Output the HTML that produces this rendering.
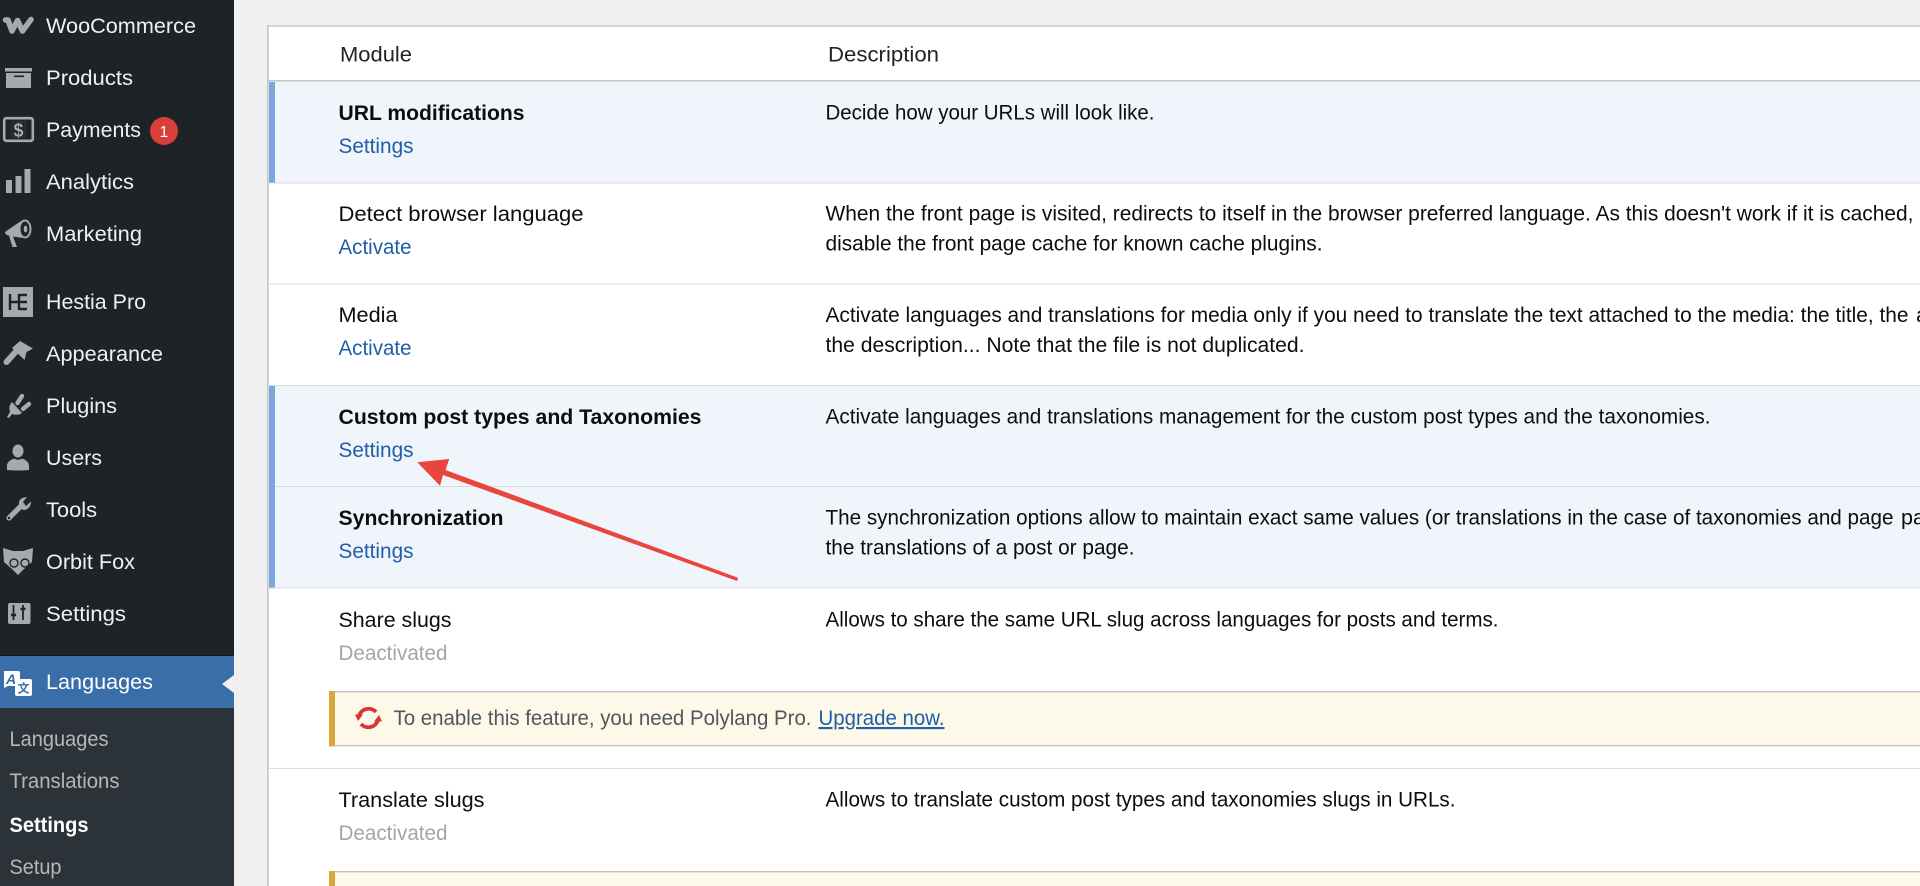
<!DOCTYPE html>
<html lang="en">
<head>
<meta charset="utf-8">
<title>Polylang Settings</title>
<style>
html,body{margin:0;padding:0;width:1920px;height:886px;overflow:hidden;background:#f0f0f1}
svg{display:block}
text{font-family:"Liberation Sans","Noto Sans CJK SC",sans-serif;font-size:21.5px;white-space:pre}
.m{fill:#f0f0f1}
.s{fill:#b4b7bb;font-size:21px}
.t{fill:#0c0d0e}
.b{font-weight:700}
.l{fill:#1f5ea8}
.d{fill:#a2a5aa}
.h{fill:#1d2327}
.i{fill:#a7aaad}
</style>
</head>
<body>
<svg width="1920" height="886" viewBox="0 0 1920 886" xmlns="http://www.w3.org/2000/svg">
<!-- sidebar -->
<rect x="0" y="0" width="234" height="886" fill="#1d2327"/>
<rect x="0" y="708" width="234" height="178" fill="#2c3338"/>
<rect x="0" y="655" width="234" height="1" fill="#111417"/>
<rect x="0" y="656" width="234" height="52" fill="#3a6ea9"/>
<polygon points="222,684 234,675 234,693" fill="#f0f0f1"/>

<text class="m" x="46" y="33" textLength="150" lengthAdjust="spacingAndGlyphs">WooCommerce</text>
<text class="m" x="46" y="85" textLength="87" lengthAdjust="spacingAndGlyphs">Products</text>
<text class="m" x="46" y="137" textLength="95" lengthAdjust="spacingAndGlyphs">Payments</text>
<text class="m" x="46" y="189" textLength="88" lengthAdjust="spacingAndGlyphs">Analytics</text>
<text class="m" x="46" y="241" textLength="96" lengthAdjust="spacingAndGlyphs">Marketing</text>
<text class="m" x="46" y="309" textLength="100" lengthAdjust="spacingAndGlyphs">Hestia Pro</text>
<text class="m" x="46" y="361" textLength="117" lengthAdjust="spacingAndGlyphs">Appearance</text>
<text class="m" x="46" y="413" textLength="71" lengthAdjust="spacingAndGlyphs">Plugins</text>
<text class="m" x="46" y="465" textLength="56" lengthAdjust="spacingAndGlyphs">Users</text>
<text class="m" x="46" y="517" textLength="51" lengthAdjust="spacingAndGlyphs">Tools</text>
<text class="m" x="46" y="569" textLength="89" lengthAdjust="spacingAndGlyphs">Orbit Fox</text>
<text class="m" x="46" y="621" textLength="80" lengthAdjust="spacingAndGlyphs">Settings</text>
<text x="46" y="689" fill="#fff" textLength="107" lengthAdjust="spacingAndGlyphs">Languages</text>
<text class="s" x="9.5" y="746" textLength="99" lengthAdjust="spacingAndGlyphs">Languages</text>
<text class="s" x="9.5" y="788" textLength="110" lengthAdjust="spacingAndGlyphs">Translations</text>
<text class="b" x="9.5" y="832" fill="#fff" textLength="79" lengthAdjust="spacingAndGlyphs" style="font-size:21px">Settings</text>
<text class="s" x="9.5" y="874" textLength="52" lengthAdjust="spacingAndGlyphs">Setup</text>

<!-- badge -->
<circle cx="164" cy="131" r="14" fill="#d63f3a"/>
<text x="164" y="137" fill="#fff" text-anchor="middle" style="font-size:16px">1</text>

<!-- icons -->
<path d="M5.5 20 H8 L12 31 L17.5 20.5 L22.5 31 L31 19.5" fill="none" stroke="#a7aaad" stroke-width="5.6" stroke-linejoin="round" stroke-linecap="round"/>
<path class="i" d="M5 68 H32 V71.5 H5 Z M6 73 H31 V88 H6 Z"/>
<rect x="14" y="75.5" width="10" height="1.6" fill="#1d2327"/>
<rect x="4.2" y="118.2" width="28.6" height="22.6" rx="2" fill="none" stroke="#a7aaad" stroke-width="2.6"/>
<rect x="12" y="122" width="13" height="15" fill="none" stroke="#34393e" stroke-width="1"/>
<text x="18.5" y="136.5" class="b" fill="#a7aaad" text-anchor="middle" style="font-size:18px">$</text>
<path class="i" d="M6 180 H12 V193 H6 Z M15.5 176 H21.5 V193 H15.5 Z M24.5 169 H30.5 V193 H24.5 Z"/>
<path class="i" d="M5 232 L21 221 Q17 228 22 238 L13 236.5 L17 247 L12.5 247 L9 235.5 Q5 235 5 232 Z"/>
<ellipse cx="25" cy="229" rx="5.5" ry="8.5" fill="none" stroke="#a7aaad" stroke-width="2"/>
<ellipse cx="25.5" cy="229" rx="1.8" ry="3.5" class="i"/>
<rect x="3" y="287" width="30" height="30" class="i"/>
<path d="M10 294 V310 M19 294 V310 M10 302 H27 M19 295 H27 M19 309 H27" fill="none" stroke="#1d2327" stroke-width="2.4"/>
<path class="i" d="M12 348 L20 341 L33 348.5 L26.5 352 L24.5 360 Z"/>
<path d="M6.5 362 L15.5 352" stroke="#a7aaad" stroke-width="6" stroke-linecap="round"/>
<path class="i" d="M7 417 L10 412 Q8 406 12 402 L22 413 Q18 416 12 414 L9 418 Z"/>
<path d="M17.5 403 L22 396 M23 409 L29 404" stroke="#a7aaad" stroke-width="4.4" stroke-linecap="round"/>
<ellipse cx="18" cy="451" rx="5.5" ry="6.5" class="i"/>
<path class="i" d="M7 470 V465 Q7.5 461 14 458.5 Q18 461 22 458.5 Q28.5 461 29 465 V470 Q18 471 7 470 Z"/>
<path d="M9 518 L22 505" stroke="#a7aaad" stroke-width="5.2" stroke-linecap="round"/>
<path class="i" d="M19 505 Q18 499 24 497.5 L27 497 L23 502 L26 506 L31 501.5 Q31 508 25 510 Q21 510.5 19 505 Z"/>
<circle cx="9" cy="518" r="1.2" fill="#1d2327"/>
<path class="i" d="M3 548 L13 551 H23 L33 548 L32 562 L24 569 L18 575 L12 569 L4 562 Z"/>
<circle cx="14" cy="563" r="4" fill="#a7aaad" stroke="#1d2327" stroke-width="1.4"/>
<circle cx="25" cy="563" r="4" fill="#a7aaad" stroke="#1d2327" stroke-width="1.4"/>
<rect x="8" y="603" width="22.5" height="21" rx="2" class="i"/>
<path d="M13.5 605 V620 M23 605 V620" stroke="#1d2327" stroke-width="1.8"/>
<path d="M11 615 H16 M20.5 609 H25.5" stroke="#1d2327" stroke-width="2.4"/>
<path d="M5 671 H18 Q20 671 20 673 V684 Q20 686 18 686 H8 L4 688 V673 Q3 671 5 671 Z" fill="#fff"/>
<text x="11" y="684" class="b" fill="#3a6ea9" text-anchor="middle" style="font-size:14px;font-style:italic">A</text>
<rect x="15" y="679" width="17" height="17" rx="2" fill="#fff"/>
<text x="23.5" y="692.5" fill="#3a6ea9" text-anchor="middle" style="font-size:12px;font-weight:700">文</text>

<!-- table -->
<rect x="267" y="25" width="1653" height="861" fill="#fff"/>
<rect x="267" y="25.3" width="1653" height="1.4" fill="#c3c4c7"/>
<rect x="267" y="25" width="1.6" height="861" fill="#c3c4c7"/>
<rect x="268" y="80" width="1652" height="1.6" fill="#c3c4c7"/>

<rect x="269" y="82" width="1651" height="100.5" fill="#f0f5fc"/>
<rect x="269" y="82" width="6" height="100.5" fill="#7aa7de"/>
<rect x="269" y="386" width="1651" height="201.5" fill="#f0f5fc"/>
<rect x="269" y="386" width="6" height="201.5" fill="#7aa7de"/>

<rect x="268" y="182.5" width="1652" height="1" fill="#d9dadd"/>
<rect x="268" y="283.5" width="1652" height="1" fill="#dcdcde"/>
<rect x="268" y="385" width="1652" height="1" fill="#dcdcde"/>
<rect x="275" y="486" width="1645" height="1" fill="#d6d9de"/>
<rect x="268" y="587.5" width="1652" height="1" fill="#d9dadd"/>
<rect x="268" y="768" width="1652" height="1" fill="#dcdcde"/>

<text class="h" x="340" y="61.5" textLength="72" lengthAdjust="spacingAndGlyphs">Module</text>
<text class="h" x="828" y="61.5" textLength="111" lengthAdjust="spacingAndGlyphs">Description</text>

<text class="t b" x="338.5" y="120" textLength="186" lengthAdjust="spacingAndGlyphs">URL modifications</text>
<text class="l" x="338.5" y="153" textLength="75" lengthAdjust="spacingAndGlyphs">Settings</text>
<text class="t" x="825.5" y="119.5" textLength="329" lengthAdjust="spacingAndGlyphs">Decide how your URLs will look like.</text>

<text class="t" x="338.5" y="221" textLength="245" lengthAdjust="spacingAndGlyphs">Detect browser language</text>
<text class="l" x="338.5" y="254" textLength="73" lengthAdjust="spacingAndGlyphs">Activate</text>
<text class="t" x="825.5" y="220.5" textLength="1088" lengthAdjust="spacingAndGlyphs">When the front page is visited, redirects to itself in the browser preferred language. As this doesn't work if it is cached,</text>
<text class="t" x="825.5" y="250.5" textLength="497" lengthAdjust="spacingAndGlyphs">disable the front page cache for known cache plugins.</text>

<text class="t" x="338.5" y="322" textLength="59" lengthAdjust="spacingAndGlyphs">Media</text>
<text class="l" x="338.5" y="355" textLength="73" lengthAdjust="spacingAndGlyphs">Activate</text>
<text class="t" x="825.5" y="322" textLength="1083" lengthAdjust="spacingAndGlyphs">Activate languages and translations for media only if you need to translate the text attached to the media: the title, the</text>
<text class="t" x="1916" y="322">alt</text>
<text class="t" x="825.5" y="352" textLength="479" lengthAdjust="spacingAndGlyphs">the description... Note that the file is not duplicated.</text>

<text class="t b" x="338.5" y="424" textLength="363" lengthAdjust="spacingAndGlyphs">Custom post types and Taxonomies</text>
<text class="l" x="338.5" y="457" textLength="75" lengthAdjust="spacingAndGlyphs">Settings</text>
<text class="t" x="825.5" y="423.5" textLength="885" lengthAdjust="spacingAndGlyphs">Activate languages and translations management for the custom post types and the taxonomies.</text>

<text class="t b" x="338.5" y="525" textLength="165" lengthAdjust="spacingAndGlyphs">Synchronization</text>
<text class="l" x="338.5" y="558" textLength="75" lengthAdjust="spacingAndGlyphs">Settings</text>
<text class="t" x="825.5" y="524.5" textLength="1068" lengthAdjust="spacingAndGlyphs">The synchronization options allow to maintain exact same values (or translations in the case of taxonomies and page</text>
<text class="t" x="1901" y="524.5">parents</text>
<text class="t" x="825.5" y="554.5" textLength="309" lengthAdjust="spacingAndGlyphs">the translations of a post or page.</text>

<text class="t" x="338.5" y="627" textLength="113" lengthAdjust="spacingAndGlyphs">Share slugs</text>
<text class="d" x="338.5" y="660" textLength="109" lengthAdjust="spacingAndGlyphs">Deactivated</text>
<text class="t" x="825.5" y="626.5" textLength="673" lengthAdjust="spacingAndGlyphs">Allows to share the same URL slug across languages for posts and terms.</text>

<!-- notice 1 -->
<rect x="329" y="691" width="1591" height="55" fill="#fcf9e8"/>
<rect x="329" y="691" width="1591" height="1.4" fill="#c3c4c7"/>
<rect x="329" y="745" width="1591" height="1.4" fill="#c3c4c7"/>
<rect x="329" y="691" width="6" height="55.4" fill="#d8a83a"/>
<path d="M359 716 A10 10 0 0 1 376 712 M378 720 A10 10 0 0 1 361 724" fill="none" stroke="#d63638" stroke-width="3.8"/>
<path d="M355 714.5 H363 L358 721 Z M382 721.5 H374 L379 715 Z" fill="#d63638"/>
<text x="393.5" y="725" fill="#50575e" textLength="418" lengthAdjust="spacingAndGlyphs">To enable this feature, you need Polylang Pro.</text>
<text x="818.5" y="725" class="l" text-decoration="underline" textLength="126" lengthAdjust="spacingAndGlyphs">Upgrade now.</text>

<text class="t" x="338.5" y="807" textLength="146" lengthAdjust="spacingAndGlyphs">Translate slugs</text>
<text class="d" x="338.5" y="840" textLength="109" lengthAdjust="spacingAndGlyphs">Deactivated</text>
<text class="t" x="825.5" y="806.5" textLength="630" lengthAdjust="spacingAndGlyphs">Allows to translate custom post types and taxonomies slugs in URLs.</text>

<!-- notice 2 -->
<rect x="329" y="871" width="1591" height="15" fill="#fcf9e8"/>
<rect x="329" y="871" width="1591" height="1.4" fill="#c3c4c7"/>
<rect x="329" y="871" width="6" height="15" fill="#d8a83a"/>

<!-- arrow -->
<polygon points="417.3,462.3 449.3,459 445.5,470 738,577.8 737,581 443,475 440,485.7" fill="#e8453c"/>
</svg>
</body>
</html>
